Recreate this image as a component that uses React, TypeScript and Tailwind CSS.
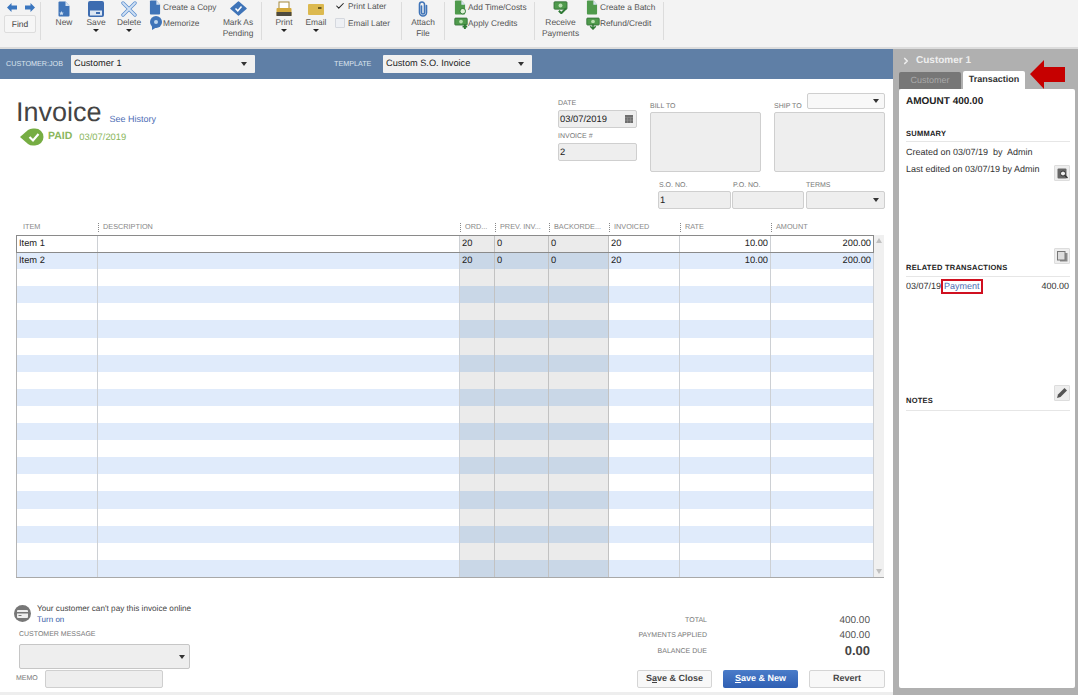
import React from 'react';
import { ChevronRight, Check } from 'lucide-react';

function Sep() {
  return <div className="w-px h-[38px] mt-[2px] bg-[#dcdcdc] shrink-0" />;
}

function Caret() {
  return <div className="w-0 h-0 border-x-[3px] border-x-transparent border-t-[3px] border-t-[#222] mx-auto mt-[1px]" />;
}

function Big({ icon, label, caret, className }: { icon: React.ReactNode; label: React.ReactNode; caret?: boolean; className: string }) {
  return (
    <div className={`flex flex-col items-center shrink-0 mt-[1px] ${className}`}>
      <div className="h-[16px] flex items-start justify-center">{icon}</div>
      <div className="text-[8.4px] leading-[11px] text-[#555] text-center whitespace-nowrap">{label}</div>
      {caret && <Caret />}
    </div>
  );
}

function Mini({ icon, label }: { icon: React.ReactNode; label: string }) {
  return (
    <div className="flex items-center h-[16px] whitespace-nowrap text-[8.3px] text-[#555]">
      <div className="w-[14px] shrink-0 flex items-center">{icon}</div>
      <span>{label}</span>
    </div>
  );
}

function MoneyIcon({ mark = 'plus', w = 14 }: { mark?: 'plus' | 'down' | 'check'; w?: number }) {
  return (
    <svg width={w} height="13" viewBox="0 0 18 16">
      <rect x="1" y="1" width="16" height="9" rx="1" fill="#4f9a4c" stroke="#2f6d33" />
      <circle cx="9" cy="5.5" r="2.4" fill="#b9dfb0" />
      {mark === 'plus' && <path d="M11 12h6M14 9v6" stroke="#2f7a35" strokeWidth="2.5" />}
      {mark === 'down' && <path d="M9 8v7M5.500 11.500 9 15l3.500-3.500" stroke="#2f7a35" strokeWidth="2" fill="none" />}
      {mark === 'check' && <path d="M7 12l3 3 6-6" stroke="#2f7a35" strokeWidth="2.500" fill="none" />}
    </svg>
  );
}

function DocIcon({ color = '#3f74b8', w = 12, h = 15, badge }: { color?: string; w?: number; h?: number; badge?: React.ReactNode }) {
  return (
    <svg width={w} height={h} viewBox="0 0 13 16">
      <path d="M1 1.500Q1 .5 2 .5H8L12 5V14.500Q12 15.500 11 15.500H2Q1 15.500 1 14.500Z" fill={color} />
      <path d="M8 .5V5H12Z" fill="#d7e4f2" />
      {badge}
    </svg>
  );
}

function Toolbar() {
  return (
    <div className="h-[47px] bg-[#f3f3f3] flex items-start overflow-hidden">
      <div className="w-[40px] shrink-0 flex flex-col items-start pl-[4px]">
        <div className="flex gap-[8px] mt-[3px] ml-[3px] h-[9px] items-center">
          <svg width="10" height="9" viewBox="0 0 10 9"><path d="M0 4.500 4.500 0V2.500H10V6.500H4.500V9Z" fill="#3a76bf" /></svg>
          <svg width="10" height="9" viewBox="0 0 10 9"><path d="M10 4.500 5.500 0V2.500H0V6.500H5.500V9Z" fill="#3a76bf" /></svg>
        </div>
        <div className="mt-[3px] w-[32px] h-[18px] bg-[#f6f6f6] border border-[#ddd] rounded-[2px] text-[8.5px] leading-[16px] text-center text-[#444]">Find</div>
      </div>
      <Sep />
      <Big className="w-[46px]" label="New" icon={<DocIcon w={14} h={16} badge={<path d="M4 10l.7 1.500 1.600.2-1.200 1 .3 1.600L4 13.500l-1.400.8.3-1.600-1.200-1 1.600-.2Z" fill="#cfe0f2" />} />} />
      <Big className="w-[18px]" label="Save" caret icon={
        <svg width="16" height="16" viewBox="0 0 16 16"><rect width="16" height="16" rx="2" fill="#3d6cb0" /><rect x="2" y="9.500" width="12" height="5" fill="#dbe6f3" /><rect x="8" y="11" width="4" height="2" fill="#3d6cb0" /></svg>
      } />
      <Big className="w-[48px]" label="Delete" caret icon={
        <svg width="16" height="16" viewBox="0 0 16 16"><path d="M2 2 14 14M14 2 2 14" stroke="#5d8fce" strokeWidth="3.400" strokeLinecap="round" /><path d="M2 2 14 14M14 2 2 14" stroke="#cfe0f4" strokeWidth="1.800" strokeLinecap="round" /></svg>
      } />
      <div className="w-[66px] shrink-0 -mt-[1px] -ml-[4px]">
        <Mini label="Create a Copy" icon={<DocIcon />} />
        <Mini label="Memorize" icon={
          <svg width="14" height="14" viewBox="0 0 14 14"><circle cx="7" cy="6" r="6" fill="#3f74b8" /><path d="M3 10 3 14 8 11Z" fill="#3f74b8" /><circle cx="7" cy="6" r="2" fill="#bcd5ef" /></svg>
        } />
      </div>
      <Big className="w-[46px]" label={<>Mark As<br />Pending</>} icon={
        <svg width="17" height="15" viewBox="0 0 17 15"><path d="M8.500 1 16 7.500 8.500 14 1 7.500Z" fill="#3f74b8" stroke="#3f74b8" strokeWidth="1.500" strokeLinejoin="round" /><path d="M5.500 7.500 7.800 9.800 11.500 5.500" stroke="#fff" strokeWidth="1.500" fill="none" /></svg>
      } />
      <Sep />
      <Big className="w-[44px]" label="Print" caret icon={
        <svg width="16" height="16" viewBox="0 0 16 16"><rect x="3" y="1" width="10" height="7" fill="#fff" stroke="#a58a3d" /><rect x="0.500" y="7" width="15" height="8" rx="1" fill="#d3a93c" /><rect x="0.500" y="11" width="15" height="4" fill="#4d4a3f" /></svg>
      } />
      <Big className="w-[20px]" label="Email" caret icon={
        <svg className="mt-[3px]" width="16" height="11" viewBox="0 0 16 11"><rect width="16" height="11" rx="1" fill="#dcb94f" /><rect x="10" y="3" width="3.500" height="2" fill="#6a5a20" /></svg>
      } />
      <div className="w-[66px] ml-[9px] shrink-0 -mt-[1px] text-[8.3px] text-[#555] whitespace-nowrap">
        <div className="flex items-center gap-[3px] h-[14px] mt-[0px]">
          <Check size={10} strokeWidth={2.500} className="text-[#222]" />
          <span>Print Later</span>
        </div>
        <div className="flex items-center gap-[3px] h-[14px] mt-[3px]">
          <div className="w-[10px] h-[10px] bg-[#eef0f4] border border-[#d5d8de] rounded-[1px]" />
          <span>Email Later</span>
        </div>
      </div>
      <Sep />
      <Big className="w-[42px]" label={<>Attach<br />File</>} icon={
        <svg width="10" height="16" viewBox="0 0 10 16" fill="none" stroke="#3f74b8" strokeWidth="1.600" strokeLinecap="round">
          <path d="M3.500 5V11.500a1.500 1.500 0 0 0 3 0V3.500a2.500 2.500 0 0 0-5 0V11.500a3.500 3.500 0 0 0 7 0V4.500" />
        </svg>
      } />
      <Sep />
      <div className="w-[80px] shrink-0 ml-[9px] -mt-[1px]">
        <Mini label="Add Time/Costs" icon={<DocIcon color="#4f9a4c" badge={<circle cx="9.500" cy="12" r="3" fill="#dcefd5" stroke="#2f7a35" />} />} />
        <Mini label="Apply Credits" icon={<MoneyIcon />} />
      </div>
      <Sep />
      <Big className="w-[51px]" label={<>Receive<br />Payments</>} icon={<MoneyIcon mark="check" w={17} />} />
      <div className="w-[77px] shrink-0 -mt-[1px]">
        <Mini label="Create a Batch" icon={<DocIcon color="#4f9a4c" />} />
        <Mini label="Refund/Credit" icon={<MoneyIcon mark="down" />} />
      </div>
      <Sep />
    </div>
  );
}

function Select({ value, className }: { value: string; className: string }) {
  return (
    <div className={`h-[18px] bg-[#f1f1f1] rounded-[1px] flex items-center justify-between pl-[3px] pr-[8px] text-[9.2px] text-[#222] ${className}`}>
      <span>{value}</span>
      <div className="w-0 h-0 border-x-[3.500px] border-x-transparent border-t-[4px] border-t-[#333]" />
    </div>
  );
}

function Field({ value, className, caret }: { value?: string; className: string; caret?: boolean }) {
  return (
    <div className={`bg-[#eeeeee] border border-[#cfcfcf] rounded-[2px] flex items-center justify-between pl-[1px] pr-[2px] text-[9.4px] text-[#222] ${className}`}>
      <span>{value}</span>
      {caret && <div className="w-0 h-0 mr-[3px] border-x-[3.500px] border-x-transparent border-t-[4px] border-t-[#333]" />}
    </div>
  );
}

function Label({ children, className = '' }: { children: React.ReactNode; className?: string }) {
  return <div className={`text-[7px] leading-[10px] text-[#777] whitespace-nowrap ${className}`}>{children}</div>;
}

const COLS = [
  { name: 'ITEM', w: 'w-[82px]' },
  { name: 'DESCRIPTION', w: 'w-[362px]' },
  { name: 'ORD...', w: 'w-[35px]' },
  { name: 'PREV. INV...', w: 'w-[54px]' },
  { name: 'BACKORDE...', w: 'w-[60px]' },
  { name: 'INVOICED', w: 'w-[71px]' },
  { name: 'RATE', w: 'w-[91px]' },
  { name: 'AMOUNT', w: 'w-[103px]' },
];

const ROWS = [
  ['Item 1', '', '20', '0', '0', '20', '10.00', '200.00'],
  ['Item 2', '', '20', '0', '0', '20', '10.00', '200.00'],
  ...Array.from({ length: 18 }, () => ['', '', '', '', '', '', '', '']),
];

function Grid() {
  return (
    <div className="ml-[16px] w-[868px]">
      <div className="flex h-[17px] pt-[2px] items-center text-[7.3px] text-[#888]">
        {COLS.map((c, i) => (
          <div key={c.name} className={`${c.w} shrink-0 flex items-center whitespace-nowrap overflow-hidden`}>
            {i > 0 && <div className="h-[9px] border-l border-dotted border-[#888] mr-[4px]" />}
            <span className={i === 0 ? 'pl-[7px]' : ''}>{c.name}</span>
          </div>
        ))}
      </div>
      <div className="flex h-[343px] border-b border-[#a8a8a8]">
        <div className="w-[858px] shrink-0 relative">
          {ROWS.map((row, r) => (
            <div key={r} className={`flex h-[17.1px] ${r % 2 === 1 ? 'bg-[#e0ebfb]' : 'bg-white'}`}>
              {row.map((cell, c) => (
                <div
                  key={c}
                  className={`${COLS[c].w} shrink-0 h-full border-r flex items-center px-[2px] text-[9.3px] text-[#222] ${c === 0 ? 'border-l border-l-[#b5b5b5]' : ''} ${c >= 6 ? 'justify-end' : ''} ${c >= 2 && c <= 4 ? 'border-r-[#c2c2c2]' : 'border-r-[#cdd0d4]'} ${c >= 2 && c <= 4 ? (r % 2 === 1 ? 'bg-[#c9d7e7]' : 'bg-[#ebebeb]') : ''}`}
                >
                  {cell}
                </div>
              ))}
            </div>
          ))}
          <div className="absolute left-0 top-0 w-full h-[18px] border border-[#8a8a8a] pointer-events-none" />
        </div>
        <div className="w-[10px] shrink-0 bg-[#f0f0f0] flex flex-col justify-between items-center py-[3px]">
          <div className="w-0 h-0 border-x-[3.500px] border-x-transparent border-b-[5px] border-b-[#c0c0c0]" />
          <div className="w-0 h-0 border-x-[3.500px] border-x-transparent border-t-[5px] border-t-[#c0c0c0]" />
        </div>
      </div>
    </div>
  );
}

function Header() {
  return (
    <div className="flex h-[139px]">
      <div className="w-[558px] shrink-0 pl-[16px] pt-[17px]">
        <div className="flex items-end">
          <span className="text-[27px] leading-[32px] text-[#444]">Invoice</span>
          <span className="ml-[8px] mb-[3px] text-[9px] leading-[12px] text-[#4d6db5]">See History</span>
        </div>
        <div className="flex items-center ml-[4px]">
          <svg width="24" height="18" viewBox="0 0 24 18">
            <path d="M0 9 8 2Q10 .5 13 .5H15A8.500 8.500 0 0 1 15 17.500H13Q10 17.500 8 16Z" fill="#76ad43" />
            <path d="M9.500 9 13 12.500 18.500 6" stroke="#fff" strokeWidth="2.200" fill="none" />
          </svg>
          <span className="ml-[4px] text-[10.5px] font-bold text-[#8ab65c]">PAID</span>
          <span className="ml-[7px] text-[9.4px] text-[#8ab65c]">03/07/2019</span>
        </div>
      </div>
      <div className="w-[92px] shrink-0 pt-[20px]">
        <Label>DATE</Label>
        <div className="mt-[1px] w-[79px] h-[18px] bg-[#eeeeee] border border-[#cfcfcf] rounded-[2px] flex items-center justify-between pl-[1px] pr-[3px] text-[9.4px] text-[#222]">
          <span>03/07/2019</span>
          <svg width="8" height="8" viewBox="0 0 8 8"><rect width="8" height="8" fill="#6f6f6f" /><path d="M0 2.500h8M2.500 2.500V8M5.500 2.500V8M0 5.200h8" stroke="#9a9a9a" strokeWidth=".5" /></svg>
        </div>
        <Label className="mt-[4px]">INVOICE #</Label>
        <Field value="2" className="mt-[1px] w-[79px] h-[18px]" />
      </div>
      <div className="w-[235px] shrink-0 pt-[14px]">
        <div className="flex h-[16px] items-end">
          <Label className="w-[124px] shrink-0 mb-[-3px]">BILL TO</Label>
          <Label className="w-[33px] shrink-0 mb-[-3px]">SHIP TO</Label>
          <Field caret className="w-[78px] h-[16px] !bg-[#f8f8f8]" />
        </div>
        <div className="flex mt-[3px]">
          <div className="w-[111px] h-[60px] bg-[#eeeeee] border border-[#cfcfcf] rounded-[2px]" />
          <div className="ml-[13px] w-[111px] h-[60px] bg-[#eeeeee] border border-[#cfcfcf] rounded-[2px]" />
        </div>
        <div className="flex ml-[8px] mt-[9px]">
          <div className="w-[74px] shrink-0">
            <Label className="ml-[1px]">S.O. NO.</Label>
            <Field value="1" className="w-[73px] h-[18px]" />
          </div>
          <div className="w-[74px] shrink-0">
            <Label className="ml-[1px]">P.O. NO.</Label>
            <Field className="w-[72px] h-[18px]" />
          </div>
          <div className="w-[79px] shrink-0">
            <Label>TERMS</Label>
            <Field caret className="w-[79px] h-[18px]" />
          </div>
        </div>
      </div>
    </div>
  );
}

function Footer() {
  return (
    <div className="flex flex-1 min-h-0">
      <div className="w-[300px] shrink-0 pl-[14px] pt-[26px]">
        <div className="flex items-start gap-[6px]">
          <div className="w-[17px] h-[17px] mt-[1px] rounded-full bg-[#777] flex items-center justify-center shrink-0">
            <svg width="11" height="8" viewBox="0 0 11 8"><rect width="11" height="8" rx="1" fill="#eee" /><rect y="2" width="11" height="1.500" fill="#777" /><rect x="1.500" y="5" width="3" height="1" fill="#777" /></svg>
          </div>
          <div className="text-[8.2px] leading-[10px] text-[#444] whitespace-nowrap">
            <div>Your customer can't pay this invoice online</div>
            <div className="mt-[1px] text-[8px] text-[#3b5ea8]">Turn on</div>
          </div>
        </div>
        <Label className="ml-[5px] mt-[5px]">CUSTOMER MESSAGE</Label>
        <div className="mt-[4px] ml-[5px] w-[171px] h-[25px] bg-[#eeeeee] border border-[#c6c6c6] rounded-[2px] flex items-center justify-end pr-[4px]">
          <div className="w-0 h-0 border-x-[3.500px] border-x-transparent border-t-[4px] border-t-[#333]" />
        </div>
        <div className="flex items-center mt-[1px] ml-[2px]">
          <Label className="w-[29px]">MEMO</Label>
          <div className="w-[118px] h-[18px] bg-[#eeeeee] border border-[#cfcfcf] rounded-[2px]" />
        </div>
      </div>
      <div className="w-[585px] pt-[35px] flex flex-col">
        <div className="flex flex-col gap-[1px]">
          <div className="flex items-center h-[14px]">
            <Label className="w-[407px] text-right mt-[2px]">TOTAL</Label>
            <span className="w-[163px] text-right text-[10px] text-[#555]">400.00</span>
          </div>
          <div className="flex items-center h-[14px]">
            <Label className="w-[407px] text-right mt-[2px]">PAYMENTS APPLIED</Label>
            <span className="w-[163px] text-right text-[10px] text-[#555]">400.00</span>
          </div>
          <div className="flex items-center h-[15px]">
            <Label className="w-[407px] text-right mt-[2px]">BALANCE DUE</Label>
            <span className="w-[163px] text-right text-[13px] font-bold text-[#444]">0.00</span>
          </div>
        </div>
        <div className="flex justify-end gap-[11px] mt-[12px] text-[9px] font-bold">
          <div className="w-[75px] h-[18px] bg-[#f8f8f8] border border-[#d5d5d5] rounded-[2px] flex items-center justify-center text-[#444]">
            <span>S<u>a</u>ve &amp; Close</span>
          </div>
          <div className="w-[75px] h-[18px] bg-gradient-to-b from-[#4a7cc9] to-[#2f5fb3] rounded-[2px] flex items-center justify-center text-white">
            <span><u>S</u>ave &amp; New</span>
          </div>
          <div className="w-[76px] h-[18px] bg-[#f8f8f8] border border-[#d5d5d5] rounded-[2px] flex items-center justify-center text-[#444]">
            Revert
          </div>
        </div>
      </div>
    </div>
  );
}

function Main() {
  return (
    <div className="w-[893px] shrink-0 bg-white flex flex-col">
      <div className="h-[30px] bg-[#5f7fa6] flex items-center">
        <span className="ml-[6px] w-[65px] text-[7.2px] text-[#dbe4ee] whitespace-nowrap">CUSTOMER:JOB</span>
        <Select value="Customer 1" className="w-[184px]" />
        <span className="ml-[79px] w-[49px] text-[7.2px] text-[#dbe4ee]">TEMPLATE</span>
        <Select value="Custom S.O. Invoice" className="w-[149px]" />
      </div>
      <Header />
      <Grid />
      <Footer />
      <div className="h-[3px] bg-[#eeeeee]" />
    </div>
  );
}

function SectionTitle({ children, className = '' }: { children: React.ReactNode; className?: string }) {
  return <div className={`text-[7.5px] leading-[10px] font-bold text-[#222] tracking-[0.25px] border-b border-[#e6e6e6] ${className}`}>{children}</div>;
}

function MiniBtn({ children }: { children: React.ReactNode }) {
  return <div className="w-[16px] h-[16px] bg-[#eeeeee] border border-[#ddd] rounded-[1px] flex items-center justify-center shrink-0">{children}</div>;
}

function Side() {
  return (
    <div className="flex-1 bg-[#b0b0b0] flex flex-col">
      <div className="h-[22px] pt-[1px] flex items-center pl-[8px] gap-[5px] text-[10px] font-bold text-[#eeeeee]">
        <ChevronRight size={10} strokeWidth={4} />
        <span>Customer 1</span>
      </div>
      <div className="flex items-end h-[18px] pl-[6px]">
        <div className="w-[62px] h-[17px] bg-[#777] rounded-t-[2px] text-[9px] text-[#a9a9a9] flex items-center justify-center">Customer</div>
        <div className="w-[62px] h-[18px] ml-[2px] bg-white rounded-t-[2px] text-[9px] font-bold text-[#333] flex items-center justify-center">Transaction</div>
        <svg className="ml-[5px] shrink-0" width="35" height="29" viewBox="0 0 35 29">
          <path d="M0 14 14 0V7H35V22H14V29Z" fill="#c60000" />
        </svg>
      </div>
      <div className="w-[176px] ml-[6px] h-[599px] bg-white rounded-[2px] pl-[7px] pr-[5px] pt-[7px]">
        <div className="text-[10px] leading-[12px] font-bold text-[#222]">AMOUNT 400.00</div>
        <SectionTitle className="mt-[21px] pb-[2px]">SUMMARY</SectionTitle>
        <div className="text-[9px] leading-[17px] mt-[2px] text-[#333]">
          <div>Created on 03/07/19&nbsp; by&nbsp; Admin</div>
          <div className="flex justify-between h-[17px] whitespace-nowrap">
            <span>Last edited on 03/07/19 by Admin</span>
            <div className="mt-[4px]">
              <MiniBtn>
                <svg width="11" height="11" viewBox="0 0 11 11"><rect x="0.500" y="0.500" width="9" height="10" rx="1" fill="#666" /><circle cx="6" cy="5.500" r="2.500" fill="#eee" stroke="#333" /><path d="M8 7.500 10.500 10" stroke="#333" strokeWidth="1.500" /></svg>
              </MiniBtn>
            </div>
          </div>
        </div>
        <div className="flex justify-end mt-[70px]">
          <MiniBtn>
            <svg width="11" height="11" viewBox="0 0 11 11"><rect x="3" y="2" width="7.500" height="8.500" fill="#8a8a8a" /><rect x="0.500" y="0.500" width="7.500" height="8.500" fill="#ddd" stroke="#777" /></svg>
          </MiniBtn>
        </div>
        <SectionTitle className="-mt-[1px] pb-[3px]">RELATED TRANSACTIONS</SectionTitle>
        <div className="flex items-center text-[9px] text-[#333] mt-[2px] h-[15px] whitespace-nowrap">
          <span className="w-[35px] shrink-0 overflow-hidden">03/07/19</span>
          <span className="border-2 border-[#d01020] px-[1px] text-[#4d6db5] leading-[11px] h-[15px] shrink-0">Payment</span>
          <span className="flex-1 text-right pr-[1px]">400.00</span>
        </div>
        <div className="flex justify-end mt-[91px]">
          <MiniBtn>
            <svg width="12" height="12" viewBox="0 0 12 12"><path d="M1 11 2 7.500 8.500 1 11 3.500 4.500 10Z" fill="#555" /></svg>
          </MiniBtn>
        </div>
        <SectionTitle className="-mt-[5px] pb-[4px]">NOTES</SectionTitle>
      </div>
    </div>
  );
}

export default function App() {
  return (
    <div className="w-[1078px] h-[695px] overflow-hidden bg-white flex flex-col font-['Liberation_Sans',Arial,sans-serif] [text-rendering:geometricPrecision]">
      <Toolbar />
      <div className="h-[2px] bg-[#dcdcdc] shrink-0" />
      <div className="flex flex-1 min-h-0">
        <Main />
        <Side />
      </div>
    </div>
  );
}
